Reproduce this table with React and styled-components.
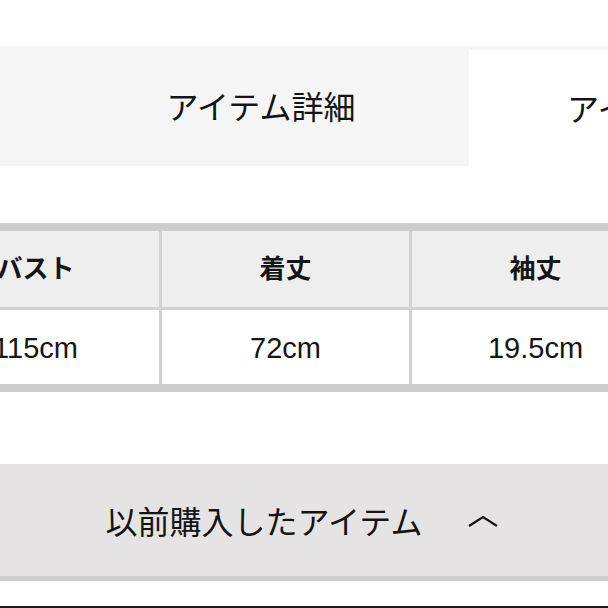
import React from "react";
import styled, { createGlobalStyle } from "styled-components";

const GlobalStyle = createGlobalStyle`
    html, body {
        margin: 0;
        padding: 0;
        background: #ffffff;
    }
    body {
        font-family: "Liberation Sans", "Noto Sans CJK JP", sans-serif;
        color: #1a1a1a;
    }
`;

const Page = styled.div`
    width: 608px;
    height: 608px;
    overflow: hidden;
    display: flex;
    flex-direction: column;
    background: #ffffff;
`;

const TabBar = styled.div`
    margin-top: 46px;
    height: 120px;
    box-sizing: border-box;
    padding: 4px 0 0 53px;
    background: #f5f5f5;
    display: flex;
    align-items: stretch;
    flex-shrink: 0;
`;

const Tab = styled.div`
    flex: 0 0 416px;
    display: flex;
    align-items: center;
    justify-content: center;
    margin-top: ${(p) => (p.active ? "0" : "-4px")};
    padding-bottom: 2px;
    background: ${(p) => (p.active ? "#ffffff" : "#f5f5f5")};
    font-family: "Noto Sans CJK JP", sans-serif;
    font-size: 32px;
    color: #141414;
    white-space: nowrap;
`;

const SizeTable = styled.div`
    margin: 57px 0 0 -88px;
    width: 1000px;
    flex-shrink: 0;
    border-top: 8px solid #cccccc;
    border-bottom: 8px solid #cccccc;
    display: grid;
    grid-template-columns: repeat(4, 250px);
`;

const Cell = styled.div`
    box-sizing: border-box;
    height: ${(p) => (p.head ? "79px" : "74px")};
    padding-bottom: ${(p) => (p.head ? "6px" : "0")};
    padding-top: ${(p) => (p.head ? "0" : "3px")};
    border-right: 3px solid #d2d2d2;
    border-bottom: ${(p) => (p.head ? "3px solid #d2d2d2" : "none")};
    background: ${(p) => (p.head ? "#eeeeee" : "#ffffff")};
    display: flex;
    align-items: center;
    justify-content: center;
    font-family: ${(p) =>
        p.head
            ? '"Noto Sans CJK JP", sans-serif'
            : '"Liberation Sans", "Noto Sans CJK JP", sans-serif'};
    font-size: ${(p) => (p.head ? "26px" : "29px")};
    font-weight: ${(p) => (p.head ? 700 : 400)};
    color: #161616;
`;

const HistoryButton = styled.div`
    margin-top: 72px;
    height: 117px;
    box-sizing: border-box;
    flex-shrink: 0;
    background: #e5e3e4;
    border-bottom: 5px solid #d0cfd0;
    display: flex;
    align-items: center;
    justify-content: center;
    gap: 46px;
    padding-right: 4px;
    font-family: "Noto Sans CJK JP", sans-serif;
    font-size: 32px;
    color: #141414;
`;

const Chevron = styled.svg`
    width: 30px;
    height: 12px;
    margin-top: 2px;
`;

const BottomLine = styled.div`
    margin-top: auto;
    height: 2px;
    background: #1a1a1a;
    flex-shrink: 0;
`;

const heads = ["バスト", "着丈", "袖丈", "肩幅"];
const values = ["115cm", "72cm", "19.5cm", "58cm"];

function App() {
    return (
        <Page>
            <GlobalStyle />
            <TabBar>
                <Tab>アイテム詳細</Tab>
                <Tab active>アイテムサイズ</Tab>
            </TabBar>

            <SizeTable>
                {heads.map((h) => (
                    <Cell head key={h}>{h}</Cell>
                ))}
                {values.map((v) => (
                    <Cell key={v}>{v}</Cell>
                ))}
            </SizeTable>

            <HistoryButton>
                <span>以前購入したアイテム</span>
                <Chevron viewBox="0 0 30 12">
                    <path d="M1 11 L15 2 L29 11" fill="none" stroke="#141414" strokeWidth="2.2" />
                </Chevron>
            </HistoryButton>

            <BottomLine />
        </Page>
    );
}

export default App;
